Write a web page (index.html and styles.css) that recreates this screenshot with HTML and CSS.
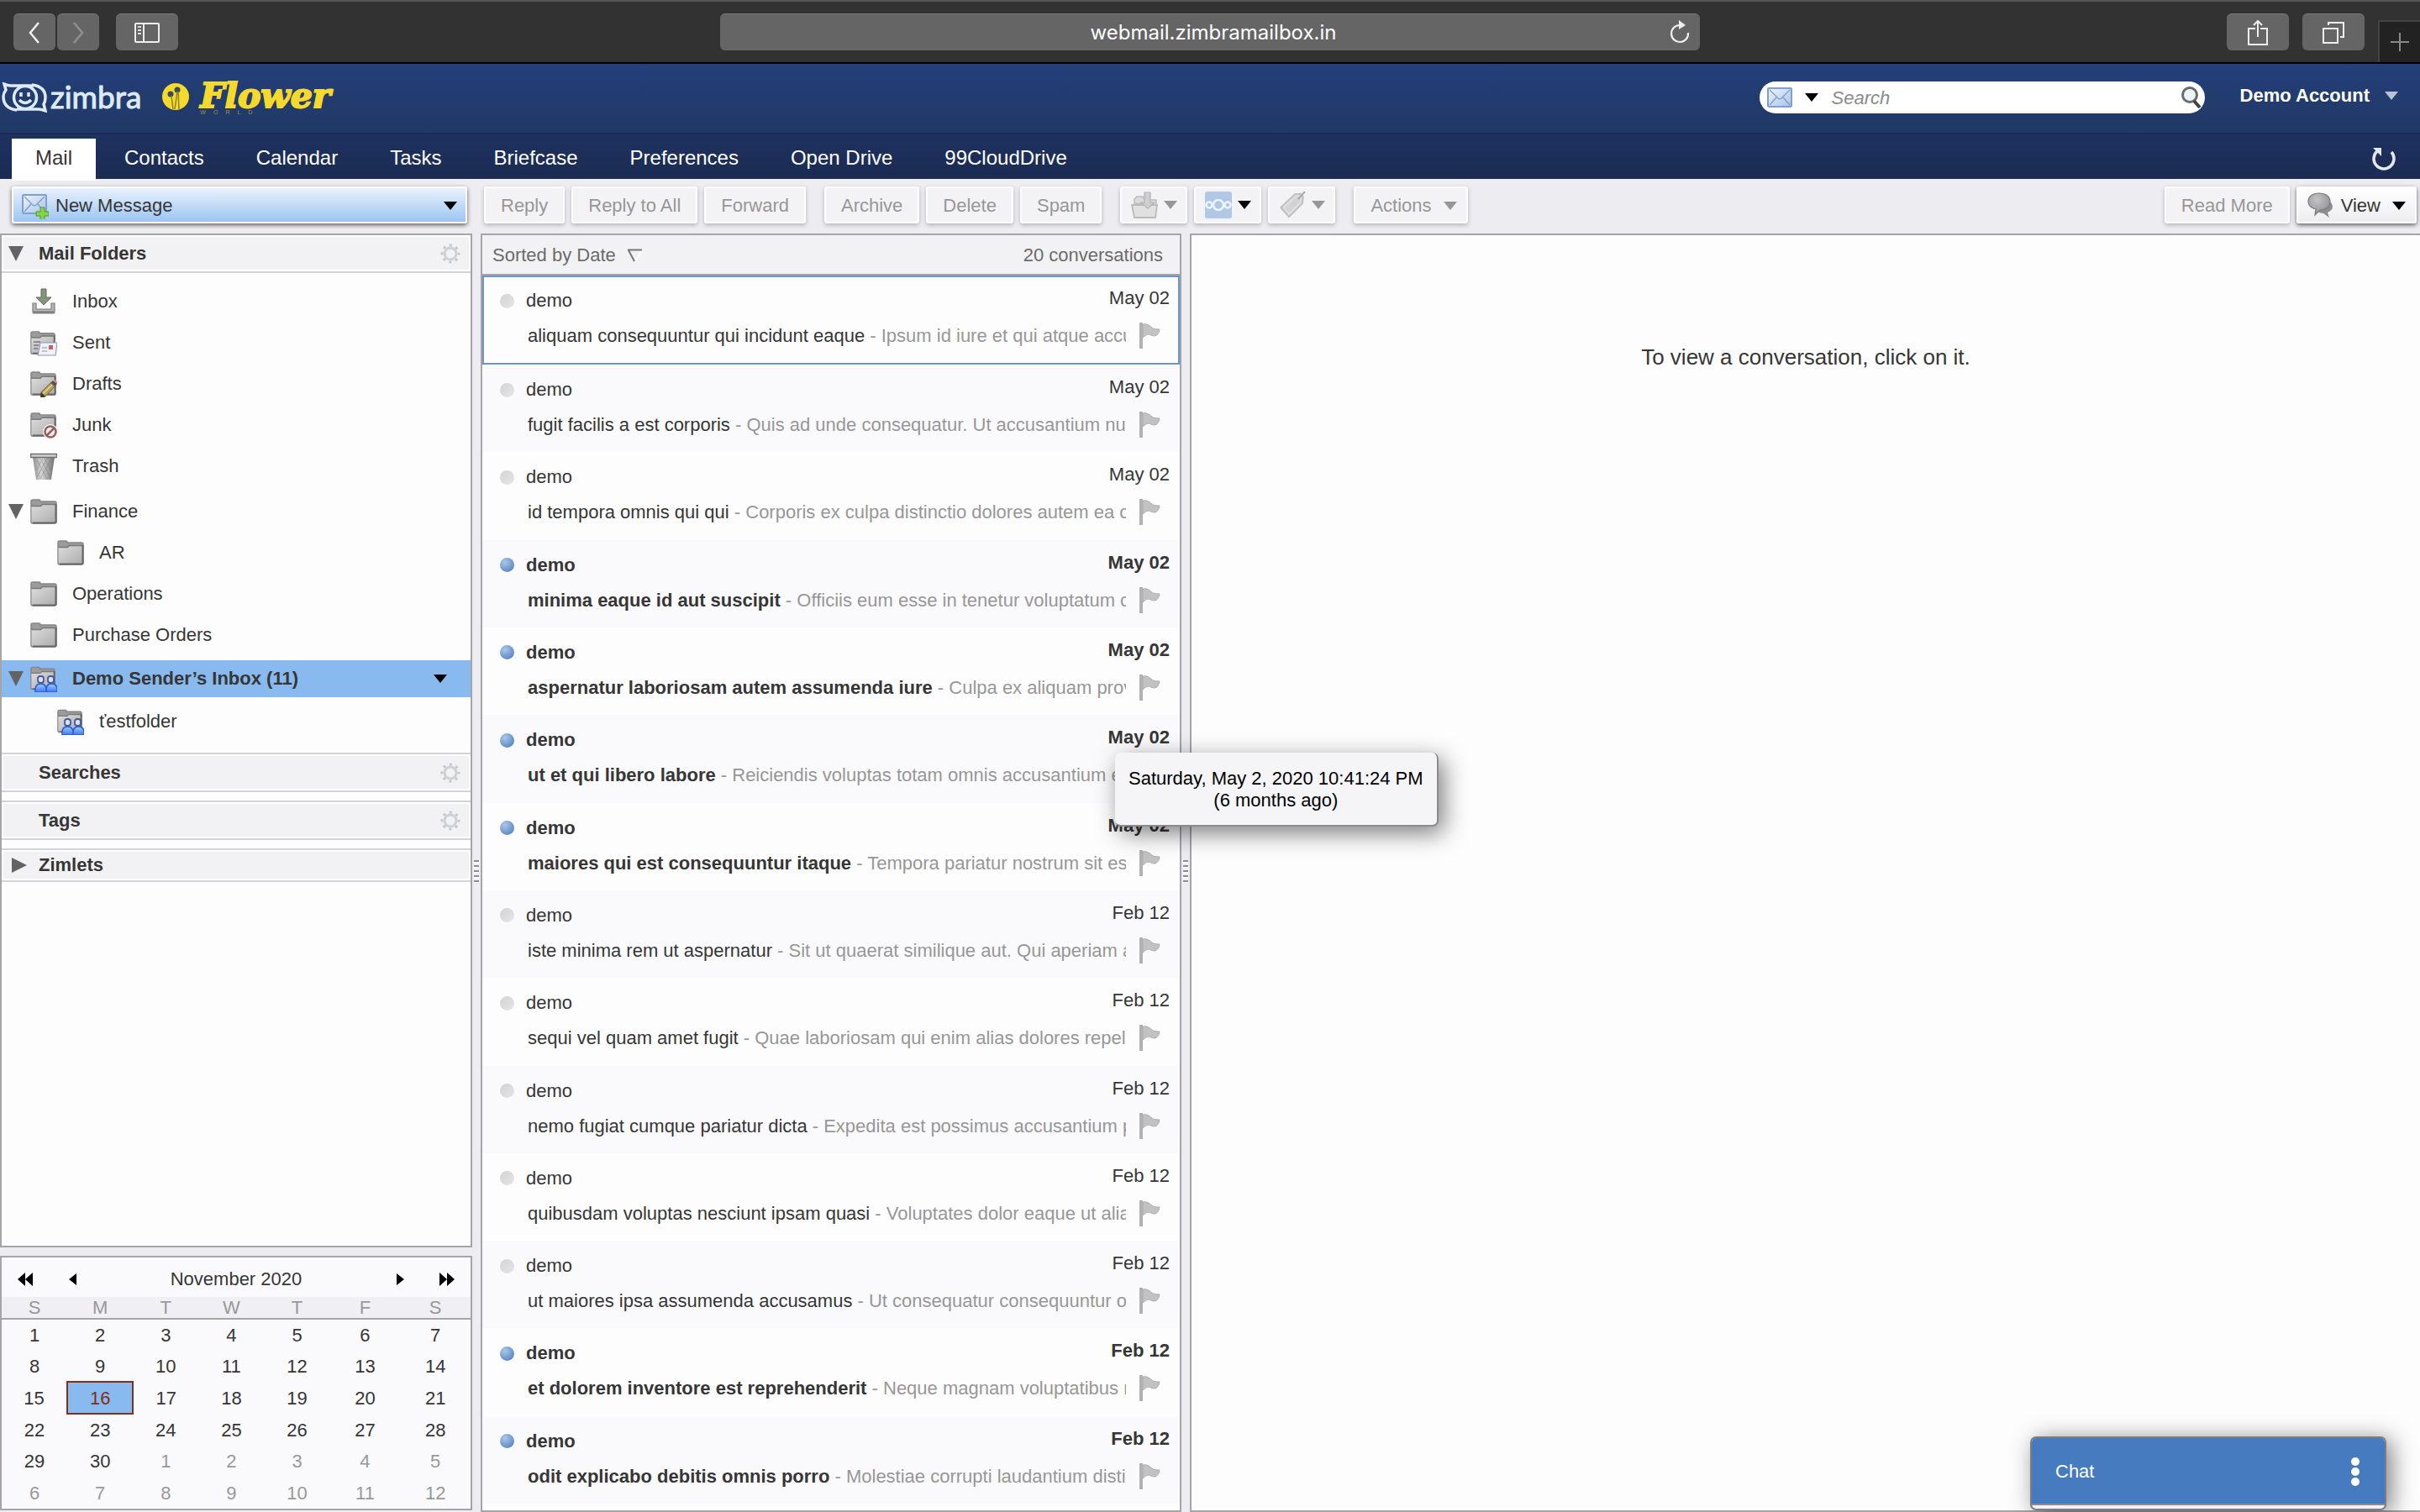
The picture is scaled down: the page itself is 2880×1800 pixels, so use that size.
FILE: index.html
```html
<!DOCTYPE html>
<html lang="en">
<head>
	<title>Zimbra: Mail</title>
	<meta charset="UTF-8">
	<meta name="viewport" content="width=device-width, initial-scale=1.0">
	<link rel="stylesheet" href="styles.css">
</head>
<body>
	<!-- shared icons -->
	<svg class="sprite" width="0" height="0" aria-hidden="true">
		<defs>
			<linearGradient id="g-folder" x1="0" y1="0" x2="1" y2="1">
				<stop offset="0" stop-color="#dcdcdc"/><stop offset="1" stop-color="#adadad"/>
			</linearGradient>
			<linearGradient id="g-bin" x1="0" y1="0" x2="1" y2="0">
				<stop offset="0" stop-color="#8a8a8a"/><stop offset=".4" stop-color="#d8d8d8"/><stop offset="1" stop-color="#6e6e6e"/>
			</linearGradient>
			<linearGradient id="g-mail" x1="0" y1="0" x2="1" y2="1">
				<stop offset="0" stop-color="#eef4fd"/><stop offset="1" stop-color="#a9c3e8"/>
			</linearGradient>
			<linearGradient id="g-body" x1="0" y1="0" x2="0" y2="1">
				<stop offset="0" stop-color="#9ccbff"/><stop offset="1" stop-color="#3c7af0"/>
			</linearGradient>
			<radialGradient id="g-bubble" cx=".4" cy=".3" r=".8">
				<stop offset="0" stop-color="#c4c4c4"/><stop offset="1" stop-color="#8a8a8a"/>
			</radialGradient>
		</defs>
		<symbol id="folder" viewBox="0 0 32 32">
			<path d="M1 4q0-2 2-2h8q1 0 1 2h17q2 0 2 2v22q0 2-2 2H3q-2 0-2-2z" fill="#9b9b9b" stroke="#858585" stroke-width="1.5"/>
			<path d="M1.500 10h11l2-2H30v20q0 1-2 1H3q-1.500 0-1.500-1z" fill="url(#g-folder)"/>
			<path d="M1.500 9.500h11l2-2H30" fill="none" stroke="#7a7a7a" stroke-width="1.500"/>
			<path d="M30.500 7v21q0 1.500-2 1.500H3" fill="none" stroke="#666" stroke-width="2"/>
		</symbol>
		<symbol id="inbox" viewBox="0 0 32 32">
			<path d="M3 18h4v7h18v-7h4v10q0 2-2 2H5q-2 0-2-2z" fill="#b5b5b5" stroke="#7d7d7d" stroke-width="1.200"/>
			<path d="M4 28.500h24" stroke="#777" stroke-width="2"/>
			<path d="M13 1h6v10h6l-9 9-9-9h6z" fill="#84957f" stroke="#5f6f5b" stroke-width="1"/>
		</symbol>
		<symbol id="sent" viewBox="0 0 32 32">
			<use href="#folder" width="30" height="32"/>
			<path d="M4 15h8M4 19h6M4 23h5" stroke="#777" stroke-width="1.500"/>
			<path d="M12 16h20l-2 15H9z" fill="#eef2f8" stroke="#8c9cb3" stroke-width="1.200"/>
			<path d="M14 22h6M14 26h6" stroke="#a9b4c6" stroke-width="1.500"/>
			<path d="M22 19h5v5h-5z" fill="#c0645c"/>
		</symbol>
		<symbol id="drafts" viewBox="0 0 32 32">
			<use href="#folder" width="31" height="31"/>
			<path d="M13 26L25 14l5 4-12 13-5 1z" fill="#b6a25a" stroke="#6f6433" stroke-width="1"/>
			<path d="M15 28L27 16" stroke="#e2d49a" stroke-width="1.500"/>
			<path d="M24 15l3-3 5 4-3 3z" fill="#555"/>
			<path d="M27 12l2-1 3 2v3z" fill="#e08a86"/>
			<path d="M12 32l1-6 5 5z" fill="#333"/>
		</symbol>
		<symbol id="junk" viewBox="0 0 32 32">
			<use href="#folder" width="31" height="31"/>
			<circle cx="24" cy="24" r="9" fill="#fdfdfd"/>
			<circle cx="24" cy="24" r="6.500" fill="#f4eded" stroke="#96605f" stroke-width="2.500"/>
			<path d="M19.500 28.500l9-9" stroke="#96605f" stroke-width="2.500"/>
		</symbol>
		<symbol id="trash" viewBox="0 0 32 32">
			<path d="M3 5h26l-4 27H7z" fill="url(#g-bin)"/>
			<path d="M8 9l12 22M12 7l12 22M17 7l8 14M24 9L12 31M20 7L8 29M15 7L7 21" stroke="#777" stroke-width=".8" opacity=".6"/>
			<path d="M.5 1.500h31v4H.5z" fill="#d0d0d0" stroke="#6e6e6e" stroke-width="1.500"/>
		</symbol>
		<symbol id="shared" viewBox="0 0 32 32">
			<use href="#folder" width="30" height="31"/>
			<path d="M6 32q-1-10 6.500-10T19 32zM19 32q-1-10 6.500-10T32 32z" fill="url(#g-body)" stroke="#2c58d8" stroke-width="1.500"/>
			<rect x="9" y="13" width="7" height="8" rx="3" fill="#d8e4f8" stroke="#46579f" stroke-width="1.800"/>
			<rect x="21" y="13" width="7" height="8" rx="3" fill="#d8e4f8" stroke="#46579f" stroke-width="1.800"/>
		</symbol>
		<symbol id="gear" viewBox="0 0 24 24">
			<circle cx="12" cy="12" r="10" fill="none" stroke="#c6c8cc" stroke-width="3" stroke-dasharray="3.200 4.654" stroke-dashoffset="1.600"/>
			<circle cx="12" cy="12" r="7" fill="none" stroke="#ced0d3" stroke-width="3"/>
		</symbol>
		<symbol id="down" viewBox="0 0 16 10"><path d="M0 0h16L8 10z" fill="currentColor"/></symbol>
		<symbol id="open" viewBox="0 0 18 18"><path d="M0 0h18L9 18z" fill="currentColor"/></symbol>
		<symbol id="flag" viewBox="0 0 26 32">
			<path d="M1 0h4v31H1z" fill="#b1b1b1"/>
			<path d="M5 2q4-1 7 1t5 4q3 1 8 1-1 7-6 8-4 0-6-2-3-1-8 4z" fill="#c2c2c2" stroke="#aeaeae" stroke-width="1"/>
		</symbol>
		<symbol id="envelope" viewBox="0 0 30 24">
			<rect x="1" y="1" width="28" height="22" rx="1" fill="url(#g-mail)" stroke="#7f9fce" stroke-width="2"/>
			<path d="M3 3l10 10q2 1.500 4 0L27 3M3 21l8-9M27 21l-8-9" fill="none" stroke="#7e9bc9" stroke-width="1.300"/>
		</symbol>
	</svg>

	<div class="browser">
		<div class="browser-nav">
			<button class="browser-btn back" aria-label="Back"><svg width="14" height="26" viewBox="0 0 14 26"><path d="M12 1L2 13l10 12" fill="none" stroke="#f0f0f0" stroke-width="2.500"/></svg></button>
			<button class="browser-btn back" aria-label="Forward"><svg width="14" height="26" viewBox="0 0 14 26"><path d="M2 1l10 12L2 25" fill="none" stroke="#8f8f8f" stroke-width="2.500"/></svg></button>
			<button class="browser-btn side" aria-label="Show sidebar"><svg width="30" height="24" viewBox="0 0 30 24"><rect x="1" y="1" width="28" height="22" rx="1" fill="none" stroke="#eee" stroke-width="2"/><path d="M11 1v22" stroke="#eee" stroke-width="2"/><path d="M4 5h4M4 9h4M4 13h4" stroke="#ddd" stroke-width="2"/></svg></button>
		</div>
		<div class="address">
			<span>webmail.zimbramailbox.in</span>
			<button class="reload" aria-label="Reload"><svg width="24" height="28" viewBox="0 0 24 28"><path d="M12 6A10 10 0 1 0 22 15" fill="none" stroke="#eee" stroke-width="2.200"/><path d="M11 0l8 6-8 5z" fill="#eee"/></svg></button>
		</div>
		<div class="browser-tools">
			<button class="browser-btn side" aria-label="Share"><svg width="24" height="32" viewBox="0 0 24 32"><path d="M9 11H1v19h22V11h-8M12 2v19M7 7l5-5 5 5" fill="none" stroke="#eee" stroke-width="2"/></svg></button>
			<button class="browser-btn side" aria-label="Show tabs"><svg width="26" height="26" viewBox="0 0 26 26"><path d="M1 8h17v17H1zM7 4V1h18v17h-4" fill="none" stroke="#eee" stroke-width="2"/></svg></button>
			<button class="new-tab" aria-label="New tab"><svg width="22" height="22" viewBox="0 0 22 22"><path d="M11 0v22M0 11h22" stroke="#8a8a8a" stroke-width="2"/></svg></button>
		</div>
	</div>

	<header class="banner">
		<div class="logos">
			<svg class="smiley" width="54" height="36" viewBox="0 0 54 36" fill="none" stroke="#dcebf7" stroke-width="3.500">
				<path d="M18 33Q2 31 2 17q0-4 3-8L3 2q4 2 8 2h27M36 3q16 2 16 15 0 5-2 8l2 8q-5-2-8-2H18"/>
				<circle cx="28" cy="18" r="13.500"/>
				<path d="M23 12v5M32 12v5"/>
				<path d="M21 21q7 7 14 0"/>
			</svg>
			<span class="wordmark">zimbra</span>
			<svg class="bloom" width="34" height="34" viewBox="0 0 34 34">
				<circle cx="17" cy="17" r="16" fill="#f5d92c"/>
				<circle cx="11" cy="14" r="3.500" fill="#3c4a55"/><circle cx="19" cy="9" r="3.500" fill="#3c4a55"/>
				<path d="M12 16l2 16M19 11l-3 21M20 11l1 21" stroke="#8a8436" stroke-width="1.500" fill="none"/>
			</svg>
			<div class="flower">
				<span class="flower-name">Flower</span>
				<span class="flower-sub"><span>W</span><span>O</span><span>R</span><span>L</span><span>D</span></span>
			</div>
		</div>
		<form class="search">
			<button type="button" class="search-type" aria-label="Search in mail"><svg width="32" height="24"><use href="#envelope"/></svg><svg class="arrow" width="16" height="10"><use href="#down"/></svg></button>
			<input type="text" placeholder="Search" aria-label="Search">
			<button class="search-go" aria-label="Run search"><svg width="24" height="28" viewBox="0 0 24 28"><circle cx="10" cy="11" r="8.500" fill="#eef3f8" stroke="#6a6a6a" stroke-width="3"/><path d="M15 18l7 8" stroke="#444" stroke-width="4"/></svg></button>
		</form>
		<button class="account">Demo Account <svg width="16" height="10"><use href="#down"/></svg></button>
	</header>

	<nav class="tabs">
		<a class="tab active" href="#">Mail</a>
		<a class="tab" href="#">Contacts</a>
		<a class="tab" href="#">Calendar</a>
		<a class="tab" href="#">Tasks</a>
		<a class="tab" href="#">Briefcase</a>
		<a class="tab" href="#">Preferences</a>
		<a class="tab" href="#">Open Drive</a>
		<a class="tab" href="#">99CloudDrive</a>
		<button class="refresh" aria-label="Refresh"><svg width="30" height="28" viewBox="0 0 30 28"><path d="M7 5a12 12 0 1 0 17 1" fill="none" stroke="#e4e8f0" stroke-width="3.500"/><path d="M2 1h10v10z" fill="#e4e8f0"/></svg></button>
	</nav>

	<div class="toolbar">
		<button class="btn compose"><svg width="32" height="32" viewBox="0 0 32 32"><use href="#envelope" y="2" width="30" height="24"/><path d="M22 18h5v5h5v5h-5v5h-5v-5h-5v-5h5z" fill="#84d44c" stroke="#4c9a26" stroke-width="1"/></svg><span>New Message</span><svg class="arrow" width="16" height="10"><use href="#down"/></svg></button>
		<div class="group">
			<button class="btn" disabled>Reply</button>
			<button class="btn" disabled>Reply to All</button>
			<button class="btn" disabled>Forward</button>
		</div>
		<div class="group">
			<button class="btn" disabled>Archive</button>
			<button class="btn" disabled>Delete</button>
			<button class="btn" disabled>Spam</button>
		</div>
		<div class="group">
			<button class="btn icon-btn" disabled aria-label="Move"><svg width="32" height="32" viewBox="0 0 32 32"><path d="M4 14V9l3-3h7l2 4h14v6z" fill="#dcdcdc" stroke="#bdbdbd" stroke-width="1.500"/><path d="M1 16h30l-2 15H4z" fill="#e0e0e0" stroke="#bababa" stroke-width="1.800"/><path d="M16 1h7v12h5l-8 7-8-7h4z" fill="#cfcfcf" stroke="#b3b3b3" stroke-width="1.200"/></svg><svg width="16" height="10"><use href="#down"/></svg></button>
			<button class="btn icon-btn on" aria-label="Share options"><svg width="32" height="32" viewBox="0 0 32 32"><rect width="32" height="32" rx="3" fill="#b0c7e5"/><g fill="none" stroke="#eef4fb" stroke-width="2.500"><circle cx="16" cy="16" r="6"/><circle cx="5" cy="16" r="3.500"/><circle cx="27" cy="16" r="3.500"/></g></svg><svg width="16" height="10"><use href="#down"/></svg></button>
			<button class="btn icon-btn" disabled aria-label="Tag"><svg width="32" height="32" viewBox="0 0 32 32"><path d="M2 19L19 3l7-.5 3 4-1 8-16 16z" fill="#d2d2d2" stroke="#bcbcbc" stroke-width="1.500"/><path d="M6 19L20 6l5-.5 1 2-1 6-13 13z" fill="none" stroke="#e6e6e6" stroke-width="1.200"/><path d="M23 9l8-9" stroke="#a8a8a8" stroke-width="2"/></svg><svg width="16" height="10"><use href="#down"/></svg></button>
		</div>
		<div class="group">
			<button class="btn" disabled>Actions <svg class="gap" width="16" height="10"><use href="#down"/></svg></button>
		</div>
		<div class="group right">
			<button class="btn" disabled>Read More</button>
			<button class="btn view"><svg width="32" height="32" viewBox="0 0 32 32"><path d="M8 16a11 8 0 1 1 16 8l2 6-7-5q-8 0-11-9z" fill="#8d8d8d"/><path d="M14 1c8 0 13 4 13 10s-5 10-12 10l-6 6 1-7C4 19 1 15 1 11 1 5 6 1 14 1z" fill="url(#g-bubble)" stroke="#7c7c7c" stroke-width="1.200"/></svg><span>View</span><svg class="arrow" width="16" height="10"><use href="#down"/></svg></button>
		</div>
	</div>

	<main class="columns">
		<aside class="sidebar">
			<div class="overview">
				<div class="section-head"><svg class="twisty" width="18" height="18"><use href="#open"/></svg><h2>Mail Folders</h2><button class="gear" aria-label="Folder options"><svg width="24" height="24"><use href="#gear"/></svg></button></div>
				<ul class="folders">
					<li><svg width="32" height="32"><use href="#inbox"/></svg><a href="#">Inbox</a></li>
					<li><svg width="32" height="32"><use href="#sent"/></svg><a href="#">Sent</a></li>
					<li><svg width="32" height="32"><use href="#drafts"/></svg><a href="#">Drafts</a></li>
					<li><svg width="32" height="32"><use href="#junk"/></svg><a href="#">Junk</a></li>
					<li><svg width="32" height="32"><use href="#trash"/></svg><a href="#">Trash</a></li>
					<li class="parent"><svg class="twisty" width="18" height="18"><use href="#open"/></svg><svg width="32" height="32"><use href="#folder"/></svg><a href="#">Finance</a></li>
					<li class="child"><svg width="32" height="32"><use href="#folder"/></svg><a href="#">AR</a></li>
					<li><svg width="32" height="32"><use href="#folder"/></svg><a href="#">Operations</a></li>
					<li><svg width="32" height="32"><use href="#folder"/></svg><a href="#">Purchase Orders</a></li>
					<li class="parent selected"><svg class="twisty" width="18" height="18"><use href="#open"/></svg><svg width="32" height="32"><use href="#shared"/></svg><a href="#">Demo Sender’s Inbox (11)</a><svg class="arrow" width="16" height="10"><use href="#down"/></svg></li>
					<li class="child"><svg width="32" height="32"><use href="#shared"/></svg><a href="#">ťestfolder</a></li>
				</ul>
				<div class="section-head"><h2>Searches</h2><button class="gear" aria-label="Search options"><svg width="24" height="24"><use href="#gear"/></svg></button></div>
				<div class="section-head"><h2>Tags</h2><button class="gear" aria-label="Tag options"><svg width="24" height="24"><use href="#gear"/></svg></button></div>
				<div class="section-head short"><svg class="twisty closed" width="18" height="18"><use href="#open"/></svg><h2>Zimlets</h2></div>
			</div>

			<div class="calendar">
				<div class="month">
					<button aria-label="Previous year"><svg width="18" height="16" viewBox="0 0 18 16"><path d="M9 0v16L0 8zM18 0v16L9 8z"/></svg></button>
					<button aria-label="Previous month"><svg width="9" height="14" viewBox="0 0 9 14"><path d="M9 0v14L0 7z"/></svg></button>
					<span>November 2020</span>
					<button aria-label="Next month"><svg width="9" height="14" viewBox="0 0 9 14"><path d="M0 0v14l9-7z"/></svg></button>
					<button aria-label="Next year"><svg width="18" height="16" viewBox="0 0 18 16"><path d="M0 0v16l9-8zM9 0v16l9-8z"/></svg></button>
				</div>
				<table>
					<thead>
						<tr><th>S</th><th>M</th><th>T</th><th>W</th><th>T</th><th class="wide">F</th><th class="wide">S</th></tr>
					</thead>
					<tbody>
						<tr><td>1</td><td>2</td><td>3</td><td>4</td><td>5</td><td>6</td><td>7</td></tr>
						<tr><td>8</td><td>9</td><td>10</td><td>11</td><td>12</td><td>13</td><td>14</td></tr>
						<tr><td>15</td><td class="today">16</td><td>17</td><td>18</td><td>19</td><td>20</td><td>21</td></tr>
						<tr><td>22</td><td>23</td><td>24</td><td>25</td><td>26</td><td>27</td><td>28</td></tr>
						<tr><td>29</td><td>30</td><td class="off">1</td><td class="off">2</td><td class="off">3</td><td class="off">4</td><td class="off">5</td></tr>
						<tr><td class="off">6</td><td class="off">7</td><td class="off">8</td><td class="off">9</td><td class="off">10</td><td class="off">11</td><td class="off">12</td></tr>
					</tbody>
				</table>
			</div>
		</aside>

		<div class="splitter"><i></i></div>

		<section class="list">
			<div class="sort">
				<span>Sorted by Date</span>
				<svg width="18" height="16" viewBox="0 0 18 16"><path d="M17 2L9 15" stroke="#fff" stroke-width="2"/><path d="M0 1.500h17M1 2l7 13" fill="none" stroke="#777" stroke-width="2"/></svg>
				<span class="count">20 conversations</span>
			</div>
			<ul class="mails">
				<li class="mail current">
					<div class="top"><i class="dot"></i><span class="from">demo</span><time>May 02</time></div>
					<div class="bottom"><p><b>aliquam consequuntur qui incidunt eaque</b> - Ipsum id iure et qui atque accu</p><svg width="26" height="32"><use href="#flag"/></svg></div>
				</li>
				<li class="mail">
					<div class="top"><i class="dot"></i><span class="from">demo</span><time>May 02</time></div>
					<div class="bottom"><p><b>fugit facilis a est corporis</b> - Quis ad unde consequatur. Ut accusantium nu</p><svg width="26" height="32"><use href="#flag"/></svg></div>
				</li>
				<li class="mail">
					<div class="top"><i class="dot"></i><span class="from">demo</span><time>May 02</time></div>
					<div class="bottom"><p><b>id tempora omnis qui qui</b> - Corporis ex culpa distinctio dolores autem ea c</p><svg width="26" height="32"><use href="#flag"/></svg></div>
				</li>
				<li class="mail unread">
					<div class="top"><i class="dot"></i><span class="from">demo</span><time>May 02</time></div>
					<div class="bottom"><p><b>minima eaque id aut suscipit</b> - Officiis eum esse in tenetur voluptatum c</p><svg width="26" height="32"><use href="#flag"/></svg></div>
				</li>
				<li class="mail unread">
					<div class="top"><i class="dot"></i><span class="from">demo</span><time>May 02</time></div>
					<div class="bottom"><p><b>aspernatur laboriosam autem assumenda iure</b> - Culpa ex aliquam prov</p><svg width="26" height="32"><use href="#flag"/></svg></div>
				</li>
				<li class="mail unread">
					<div class="top"><i class="dot"></i><span class="from">demo</span><time>May 02</time></div>
					<div class="bottom"><p><b>ut et qui libero labore</b> - Reiciendis voluptas totam omnis accusantium e</p><svg width="26" height="32"><use href="#flag"/></svg></div>
					<div class="tooltip" role="tooltip">Saturday, May 2, 2020 10:41:24 PM<br>(6 months ago)</div>
				</li>
				<li class="mail unread">
					<div class="top"><i class="dot"></i><span class="from">demo</span><time>May 02</time></div>
					<div class="bottom"><p><b>maiores qui est consequuntur itaque</b> - Tempora pariatur nostrum sit es</p><svg width="26" height="32"><use href="#flag"/></svg></div>
				</li>
				<li class="mail">
					<div class="top"><i class="dot"></i><span class="from">demo</span><time>Feb 12</time></div>
					<div class="bottom"><p><b>iste minima rem ut aspernatur</b> - Sit ut quaerat similique aut. Qui aperiam a</p><svg width="26" height="32"><use href="#flag"/></svg></div>
				</li>
				<li class="mail">
					<div class="top"><i class="dot"></i><span class="from">demo</span><time>Feb 12</time></div>
					<div class="bottom"><p><b>sequi vel quam amet fugit</b> - Quae laboriosam qui enim alias dolores repel</p><svg width="26" height="32"><use href="#flag"/></svg></div>
				</li>
				<li class="mail">
					<div class="top"><i class="dot"></i><span class="from">demo</span><time>Feb 12</time></div>
					<div class="bottom"><p><b>nemo fugiat cumque pariatur dicta</b> - Expedita est possimus accusantium p</p><svg width="26" height="32"><use href="#flag"/></svg></div>
				</li>
				<li class="mail">
					<div class="top"><i class="dot"></i><span class="from">demo</span><time>Feb 12</time></div>
					<div class="bottom"><p><b>quibusdam voluptas nesciunt ipsam quasi</b> - Voluptates dolor eaque ut alia</p><svg width="26" height="32"><use href="#flag"/></svg></div>
				</li>
				<li class="mail">
					<div class="top"><i class="dot"></i><span class="from">demo</span><time>Feb 12</time></div>
					<div class="bottom"><p><b>ut maiores ipsa assumenda accusamus</b> - Ut consequatur consequuntur o</p><svg width="26" height="32"><use href="#flag"/></svg></div>
				</li>
				<li class="mail unread">
					<div class="top"><i class="dot"></i><span class="from">demo</span><time>Feb 12</time></div>
					<div class="bottom"><p><b>et dolorem inventore est reprehenderit</b> - Neque magnam voluptatibus r</p><svg width="26" height="32"><use href="#flag"/></svg></div>
				</li>
				<li class="mail unread">
					<div class="top"><i class="dot"></i><span class="from">demo</span><time>Feb 12</time></div>
					<div class="bottom"><p><b>odit explicabo debitis omnis porro</b> - Molestiae corrupti laudantium disti</p><svg width="26" height="32"><use href="#flag"/></svg></div>
				</li>
			</ul>
		</section>

		<div class="splitter"><i></i></div>

		<section class="reader">
			<p>To view a conversation, click on it.</p>
		</section>
	</main>

	<div class="chat">
		<div class="chat-head">
			<span>Chat</span>
			<button aria-label="Chat menu"><svg width="10" height="34" viewBox="0 0 10 34"><circle cx="5" cy="5" r="5" fill="#fff"/><circle cx="5" cy="17" r="5" fill="#fff"/><circle cx="5" cy="29" r="5" fill="#fff"/></svg></button>
		</div>
	</div>
</body>
</html>
```
FILE: styles.css
```css
* {
	box-sizing: border-box;
}
body {
	margin: 0;
	height: 100vh;
	display: flex;
	flex-direction: column;
	background-color: #edecf1;
	color: #363636;
	font-family: "Liberation Sans", Arial, sans-serif;
	font-size: 22px;
	line-height: 26px;
	overflow: hidden;
}
ul {
	list-style: none;
	margin: 0;
	padding: 0;
}
p, h2 {
	margin: 0;
	font-size: 22px;
}
a {
	color: inherit;
	text-decoration: none;
}
svg {
	flex: none;
	display: block;
}
button {
	font: inherit;
	color: inherit;
	background: none;
	border: none;
	padding: 0;
	display: flex;
	align-items: center;
	justify-content: center;
}
.sprite {
	position: absolute;
}

/* browser bar */
.browser {
	display: grid;
	grid-template-columns: 1fr 1166px 1fr;
	height: 76px;
	background-color: #323232;
	border-top: 2px solid #555;
	border-bottom: 2px solid #000;
}
.browser-nav, .browser-tools {
	display: flex;
	padding-top: 14px;
}
.browser-nav {
	padding-left: 16px;
}
.browser-btn {
	height: 44px;
	width: 50px;
	background-color: #656565;
	border-top: 1px solid #7c7c7c;
	border-radius: 6px;
	margin-right: 2px;
}
.browser-btn.side {
	width: 74px;
	margin-left: 16px;
	margin-right: 0;
}
.browser-btn.back + .side {
	margin-left: 18px;
}
.address {
	display: flex;
	align-items: center;
	justify-content: center;
	height: 44px;
	margin-top: 14px;
	padding-left: 8px;
	background-color: #656565;
	border-top: 1px solid #7c7c7c;
	border-radius: 6px;
	color: #fff;
	font-family: Inter, "Liberation Sans", sans-serif;
	font-size: 24px;
	position: relative;
}
.reload {
	position: absolute;
	right: 12px;
	top: 7px;
}
.browser-tools {
	justify-content: flex-end;
}
.new-tab {
	width: 50px;
	margin-left: 16px;
	margin-top: 8px;
	background-color: #222;
	border-left: 2px solid #444;
	border-top: 2px solid #444;
}

/* banner */
.banner {
	display: flex;
	height: 84px;
	background: linear-gradient(#243f7a, #203965);
	border-bottom: 2px solid #1b2d56;
}
.logos {
	display: flex;
	align-items: flex-start;
	padding: 22px 0 0 2px;
	flex: 1;
}
.wordmark {
	margin-left: 4px;
	font-family: Lato, sans-serif;
	font-size: 37px;
	line-height: 34px;
	color: #dcebf7;
	-webkit-text-stroke: 1px #dcebf7;
}
.bloom {
	margin-left: 24px;
}
.flower {
	margin-left: 12px;
	color: #f5d92c;
}
.flower-name {
	display: block;
	font: italic bold 41px/32px "DejaVu Serif", serif;
	-webkit-text-stroke: 2px #f5d92c;
}
.flower-sub {
	display: flex;
	gap: 9px;
	font-size: 7px;
	line-height: 8px;
	color: #9c953f;
}
.search {
	display: flex;
	align-items: center;
	width: 530px;
	height: 38px;
	margin-top: 21px;
	padding: 0 4px 0 8px;
	background-color: #fff;
	border-radius: 19px;
}
.search-type {
	gap: 14px;
	color: #000;
}
.search input {
	flex: 1;
	min-width: 0;
	height: 38px;
	margin: 0 12px 0 8px;
	padding: 2px 8px 0;
	border: none;
	background: #fff;
	font: 22px "Liberation Sans", Arial, sans-serif;
}
.search input::placeholder {
	color: #8a8a8a;
	font-style: italic;
}
.account {
	align-self: flex-start;
	gap: 18px;
	margin: 25px 26px 0 42px;
	font-weight: bold;
	color: #fff;
}
.account svg {
	color: #b9c3d8;
}

/* application tabs */
.tabs {
	display: flex;
	gap: 6px;
	height: 53px;
	padding: 5px 28px 0 14px;
	background: linear-gradient(#1e325f, #1b2b52);
}
.tab {
	height: 50px;
	padding: 0 28px;
	font-size: 24px;
	line-height: 46px;
	color: #fff;
}
.tab.active {
	background-color: #fff;
	color: #363636;
	position: relative;
}
.refresh {
	margin-left: auto;
}

/* toolbar */
.toolbar {
	display: flex;
	height: 65px;
	padding: 9px 4px 0 14px;
}
.group {
	display: flex;
	gap: 8px;
	margin-left: 20px;
}
.group + .group {
	margin-left: 22px;
}
.group.right {
	margin-left: auto;
}
.btn {
	height: 44px;
	padding: 1px 18px 0;
	background-color: #f3f3f6;
	border: 2px solid #fff;
	border-radius: 3px;
	box-shadow: 0 2px 5px rgba(0, 0, 0, 0.25);
}
.btn:disabled {
	color: #979797;
}
.icon-btn {
	width: 80px;
	padding: 0;
	gap: 7px;
}
.on, .arrow {
	color: #000;
}
.gap {
	margin-left: 14px;
	margin-right: -7px;
}
.compose {
	width: 542px;
	padding: 1px 10px 0;
	justify-content: flex-start;
	gap: 8px;
	background: linear-gradient(#e9f2fd, #9cc5f2);
	box-shadow: 0 2px 5px rgba(0, 0, 0, 0.6);
}
.compose .arrow {
	margin-left: auto;
}
.view {
	padding: 1px 11px 0;
	gap: 8px;
	background: linear-gradient(#fff, #ededf1);
	box-shadow: 0 2px 5px rgba(0, 0, 0, 0.6);
}
.view .arrow {
	margin-left: 6px;
}

/* three columns */
.columns {
	flex: 1;
	min-height: 0;
	display: grid;
	grid-template-columns: 562px 10px 834px 10px 1fr;
}
.sidebar {
	display: flex;
	flex-direction: column;
	gap: 10px;
	padding-bottom: 2px;
	min-height: 0;
}
.overview {
	flex: 1;
	background-color: #fdfdfd;
	border: 2px solid #a5a5a9;
}
.section-head {
	display: flex;
	align-items: center;
	height: 47px;
	margin-bottom: 10px;
	padding: 0 12px 0 44px;
	background-color: #f2f2f4;
	border: 2px solid #d3d3d9;
	border-width: 2px 0;
	box-shadow: inset 0 0 0 2px #fff;
	position: relative;
}
.section-head:first-child {
	height: 45px;
	margin: 0;
	border-top: none;
}
.section-head.short {
	height: 40px;
}
.gear {
	margin-left: auto;
}
.twisty {
	position: absolute;
	left: 8px;
	color: #636363;
}
.twisty.closed {
	transform: rotate(-90deg);
	left: 12px;
}
.folders {
	padding: 9px 0 13px;
}
.folders li {
	display: flex;
	align-items: center;
	gap: 18px;
	height: 49px;
	padding: 0 28px 0 34px;
	position: relative;
}
.folders .child {
	padding-left: 66px;
}
.folders .parent {
	margin-top: 5px;
}
.folders .selected {
	height: 44px;
	margin-top: 6px;
	margin-bottom: 4px;
	background-color: #88b9ef;
	font-weight: bold;
}
.selected .arrow {
	margin-left: auto;
}

/* mini calendar */
.calendar {
	background-color: #fafafc;
	border: 2px solid #a5a5a9;
	height: 303px;
	display: flex;
	flex-direction: column;
}
.month {
	display: grid;
	grid-template-columns: 56px 56px 1fr 56px 56px;
	align-items: center;
	height: 47px;
	padding-top: 5px;
	text-align: center;
}
.calendar table {
	flex: 1;
	width: 100%;
	table-layout: fixed;
	border-collapse: collapse;
	text-align: center;
}
.calendar thead {
	background-color: #f0eff4;
	border-bottom: 2px solid #a5a5a9;
}
.calendar th {
	height: 26px;
	padding: 0;
	line-height: 24px;
	font-weight: normal;
	color: #999;
}
.calendar th.wide {
	width: 15%;
}
.calendar td {
	height: 37px;
	padding: 2px 0 0;
}
.calendar .off {
	color: #999;
}
.calendar .today {
	background-color: #88b9ef;
	border: 2px solid #80301b;
	color: #80301b;
}

.splitter {
	display: flex;
	align-items: center;
	justify-content: center;
	padding-bottom: 4px;
}
.splitter i {
	width: 6px;
	height: 27px;
	background: repeating-linear-gradient(#8c8c8f 0 2px, #fff 2px 4px, #edecf1 4px 6px);
}

/* conversation list */
.list {
	display: flex;
	flex-direction: column;
	min-height: 0;
	background-color: #fdfdfd;
	border: 2px solid #a5a5a9;
}
.sort {
	display: flex;
	align-items: center;
	gap: 14px;
	height: 48px;
	padding: 2px 20px 0 12px;
	background-color: #f2f2f4;
	border-bottom: 2px solid #a5a5a9;
	color: #6b6b6b;
}
.count {
	margin-left: auto;
}
.mails {
	flex: 1;
	display: flex;
	flex-direction: column;
	padding-bottom: 8px;
}
.mail {
	flex: 1;
	padding: 15px 10px 0 19px;
	border: 2px solid transparent;
	position: relative;
}
.mail:nth-child(even) {
	background-color: #fafafc;
}
.mail.current {
	flex: none;
	height: 106px;
	border-color: #6f95c4;
}
.top {
	display: flex;
	align-items: center;
}
.dot {
	width: 17px;
	height: 17px;
	margin-right: 14px;
	border-radius: 50%;
	background: linear-gradient(135deg, #d2d2d2, #e6e6e6);
}
.unread .dot {
	background: radial-gradient(circle at 35% 30%, #a9c8ea, #4674b8);
}
.top time {
	align-self: flex-start;
	margin-left: auto;
	line-height: 19px;
}
.bottom {
	display: flex;
	align-items: center;
	gap: 15px;
	height: 32px;
	margin-top: 13px;
	padding: 0 11px 0 33px;
}
.bottom p {
	flex: 1;
	min-width: 0;
	overflow: hidden;
	white-space: nowrap;
	color: #979797;
}
.bottom b {
	font-weight: normal;
	color: #363636;
}
.unread .from, .unread time, .unread b {
	font-weight: bold;
}
.tooltip {
	position: absolute;
	z-index: 2;
	top: 43px;
	left: 751px;
	padding: 18px 16px 16px;
	background-color: #f5f5f8;
	border-right: 2px solid #8b8b8e;
	border-bottom: 2px solid #8b8b8e;
	border-radius: 7px;
	box-shadow: 6px 8px 28px rgba(0, 0, 0, 0.5);
	color: #000;
	text-align: center;
	white-space: nowrap;
}

.reader {
	background-color: #fdfdfd;
	border: 2px solid #a5a5a9;
	border-right: none;
	padding: 132px 0 0;
	text-align: center;
}
.reader p {
	font-size: 26px;
}

/* chat dock */
.chat {
	position: fixed;
	right: 40px;
	bottom: 2px;
	width: 424px;
	background-color: #f2f2f4;
	border: 2px solid #7d7d82;
	border-radius: 7px;
	box-shadow: 6px 4px 28px rgba(0, 0, 0, 0.5);
	padding-bottom: 4px;
	overflow: hidden;
}
.chat-head {
	display: flex;
	align-items: center;
	justify-content: space-between;
	height: 80px;
	padding: 2px 30px 0 28px;
	background-color: #477bc0;
	border-bottom: 2px solid #8b8b8e;
	color: #fff;
}
```
